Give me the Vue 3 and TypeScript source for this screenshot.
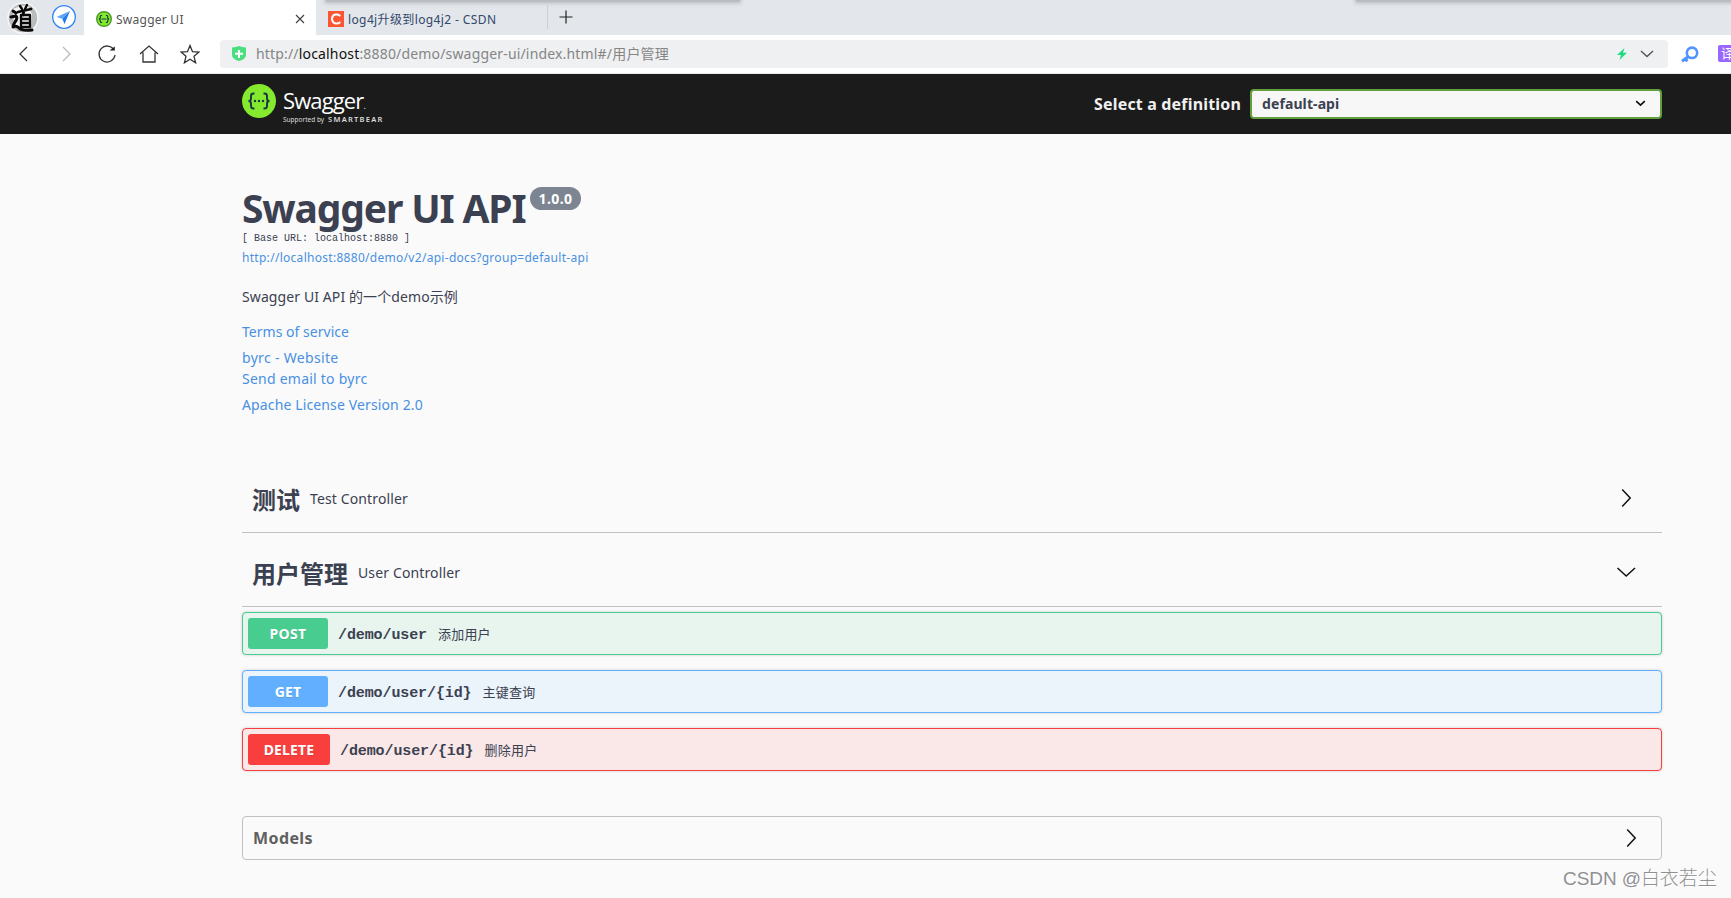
<script setup lang="ts">
interface Operation {
  method: string
  kind: string
  path: string
  summary: string
}
interface Tag {
  name: string
  description: string
  key: string
  open: boolean
}

const tags: Tag[] = [
  { name: '测试', description: 'Test Controller', key: 'test', open: false },
  { name: '用户管理', description: 'User Controller', key: 'user', open: true },
]
const operations: Operation[] = [
  { method: 'POST', kind: 'post', path: '/demo/user', summary: '添加用户' },
  { method: 'GET', kind: 'get', path: '/demo/user/{id}', summary: '主键查询' },
  { method: 'DELETE', kind: 'delete', path: '/demo/user/{id}', summary: '删除用户' },
]
</script>

<template>
  <div class="window">
    <div class="tabs">
      <div class="edge edge-left"></div>
      <div class="edge edge-right"></div>
      <div class="pins">
        <svg class="avatar" width="32" height="32" viewBox="0 0 32 32">
          <circle cx="16" cy="16" r="15" fill="#b9bbbd" stroke="#f6f6f6" stroke-width="1.5" />
          <path d="M6 7Q14 3 21 4L25 12L24 25Q17 30 7 25Z" fill="#f4f4f4" />
          <g fill="none" stroke="#080808" stroke-linecap="round" stroke-linejoin="round">
            <path d="M13 4l2 3M20 3l-2 4" stroke-width="2.4" />
            <path d="M11 10l13-3M17 9l-1 4" stroke-width="2.8" />
            <path d="M14 13h9v12h-9zM14.500 17h8M14.500 21h8" stroke-width="2.3" />
            <path d="M6 9l3 2M4 15l5-1q2 2-1 6q-2 3-2 5q3-2 6 1t13 2" stroke-width="3" />
          </g>
        </svg>
        <svg width="26" height="26" viewBox="0 0 26 26">
          <circle cx="13" cy="13" r="11.3" fill="#fff" stroke="#2b83f6" stroke-width="1.3" />
          <path d="M19 7L5.500 13l5.800 1.700z" fill="#5aa5fa" />
          <path d="M19 7l-7.700 7.700L13.500 20z" fill="#1e78ee" />
        </svg>
      </div>
      <div class="tab active">
        <svg width="16" height="16" viewBox="0 0 34 34">
          <circle cx="17" cy="17" r="15.500" fill="#85ea2d" stroke="#4a9a28" stroke-width="3" />
          <path d="M13 9q-4 0-4 3v3q0 2-3 2q3 0 3 2v3q0 3 4 3M21 9q4 0 4 3v3q0 2 3 2q-3 0-3 2v3q0 3-4 3M12 17h10" fill="none" stroke="#173647" stroke-width="2.500" />
        </svg>
        <span class="tab-title">Swagger UI</span>
        <svg class="close" width="10" height="10" viewBox="0 0 10 10"><path d="M1 1l8 8M9 1L1 9" stroke="#444" stroke-width="1.200" /></svg>
      </div>
      <div class="tab idle">
        <svg width="16" height="16" viewBox="0 0 16 16">
          <path d="M0 0h16v16H0z" fill="#fc5531" />
          <path d="M12.500 5Q8 1.800 5 4.800Q3 8 5 11Q8 14 12.400 11.200" fill="none" stroke="#fff" stroke-width="2" />
        </svg>
        <span class="tab-title csdn">log4j升级到log4j2 - CSDN</span>
      </div>
      <svg class="plus" width="14" height="14" viewBox="0 0 14 14"><path d="M7 .5v13M.5 7h13" stroke="#222" stroke-width="1.200" /></svg>
    </div>

    <div class="nav">
      <div class="nav-buttons">
        <svg width="20" height="20" viewBox="0 0 20 20"><path d="M13 3L6 10l7 7" /></svg>
        <svg width="20" height="20" viewBox="0 0 20 20" class="muted"><path d="M7 3l7 7-7 7" /></svg>
        <svg width="20" height="20" viewBox="0 0 20 20"><path d="M17 6A8 8 0 1 0 18 11" /><path d="M12.500 6.500H17.800V2.500z" fill="#222" stroke="none" /></svg>
        <svg width="20" height="20" viewBox="0 0 20 20"><path d="M1 10l9-8 9 8M4 8.500V18h12V8.500" /></svg>
        <svg width="20" height="20" viewBox="0 0 20 20"><path d="M10 1.500l2.500 6.200 6.500.4-5 4.200 1.600 6.500L10 15.200l-5.600 3.600L6 12.300 1 8.100l6.500-.4z" /></svg>
      </div>
      <div class="address">
        <svg width="14" height="15" viewBox="0 0 14 15">
          <path d="M0 1.500Q4 1.400 7 0q3 1.400 7 1.500V9q0 4-7 6Q0 13 0 9z" fill="#4ade80" />
          <path d="M7 4v8M3 7.700h8" stroke="#fff" stroke-width="2" />
        </svg>
        <span class="location">http://<b>localhost</b>:8880/demo/swagger-ui/index.html#/用户管理</span>
        <svg class="bolt" width="10" height="12" viewBox="0 0 10 12"><path d="M7.500 0L0 7h4L2.500 12 10 4.800H6z" fill="#1ddb7f" /></svg>
        <svg width="14" height="8" viewBox="0 0 14 8"><path d="M1 1l6 5.500L13 1" fill="none" stroke="#555" stroke-width="1.400" /></svg>
      </div>
      <svg class="key" width="18" height="17" viewBox="0 0 18 17">
        <circle cx="11" cy="6.800" r="5.200" fill="none" stroke="#5094ff" stroke-width="2.600" />
        <path d="M7.500 10.500L1 15.300M4.500 13l1.800 2.300" stroke="#5094ff" stroke-width="3" />
      </svg>
      <div class="translate">译</div>
    </div>

    <header class="topbar">
      <div class="wrap">
        <svg class="logo-mark" width="34" height="34" viewBox="0 0 34 34">
          <circle cx="17" cy="17" r="17" fill="#85ea2d" />
          <path d="M12.500 9.500h-1q-2.500 0-2.500 2.500v2.500q0 2.500-2.500 2.500Q9 17 9 19.500V22q0 2.500 2.500 2.500h1M21.500 9.500h1q2.500 0 2.500 2.500v2.500q0 2.500 2.500 2.500Q25 17 25 19.500V22q0 2.500-2.500 2.500h-1" fill="none" stroke="#173647" stroke-width="1.900" />
          <g fill="#173647"><circle cx="13" cy="17" r="1.200" /><circle cx="17" cy="17" r="1.200" /><circle cx="21" cy="17" r="1.200" /></g>
        </svg>
        <div class="brand">
          <div class="brand-name">Swagger<i>.</i></div>
          <div class="brand-by"><span>Supported by</span><strong>SMARTBEAR</strong></div>
        </div>
        <label class="definition"><span>Select a definition</span></label>
        <div class="select">
          <span>default-api</span>
          <svg width="11" height="7" viewBox="0 0 11 7"><path d="M1.200 1.200l4.300 4 4.300-4" fill="none" stroke="#111" stroke-width="1.700" /></svg>
        </div>
      </div>
    </header>

    <main>
      <section class="info">
        <div class="title-row"><h1>Swagger UI API</h1><span class="version">1.0.0</span></div>
        <pre class="base">[ Base URL: localhost:8880 ]</pre>
        <a class="spec">http://localhost:8880/demo/v2/api-docs?group=default-api</a>
        <p>Swagger UI API 的一个demo示例</p>
        <a class="link terms">Terms of service</a>
        <a class="link site">byrc - Website</a>
        <a class="link mail">Send email to byrc</a>
        <a class="link license">Apache License Version 2.0</a>
      </section>

      <section v-for="tag in tags" :key="tag.key" class="tag" :class="tag.key">
        <h3>{{ tag.name }}</h3>
        <small>{{ tag.description }}</small>
        <svg width="20" height="20" viewBox="0 0 20 20"><path :d="tag.open ? 'M1.500 6l8.700 8L19 6' : 'M6.200 1.500l8 8.500-8 8.500'" /></svg>
      </section>

      <div v-for="op in operations" :key="op.kind" class="op" :class="op.kind">
        <span class="method">{{ op.method }}</span>
        <code>{{ op.path }}</code>
        <span class="summary">{{ op.summary }}</span>
      </div>

      <section class="models">
        <h4>Models</h4>
        <svg width="20" height="20" viewBox="0 0 20 20"><path d="M6.200 1.500l8 8.500-8 8.500" /></svg>
      </section>
    </main>
    <div class="watermark"><span>CSDN</span> @白衣若尘</div>
  </div>
</template>

<style>
body { margin: 0; background: #fafafa; overflow: hidden; }
</style>

<style scoped>
* { box-sizing: border-box; }
.window { position: relative; width: 1731px; height: 898px; overflow: hidden; background: #fafafa; color: #3b4151; font-family: "Noto Sans", "Open Sans", "Noto Sans CJK SC", sans-serif; white-space: nowrap; }
svg { display: block; flex: none; }

.tabs { position: relative; display: flex; height: 35px; background: #e3e6eb; overflow: hidden; }
.edge { position: absolute; top: -4px; height: 6px; background: #b9bdc0; box-shadow: 0 0 4px 1px #b4b8bb; }
.edge-left { left: 326px; width: 414px; }
.edge-right { left: 1356px; width: 390px; }
.pins { display: flex; width: 84px; padding: 2px 0 0 7px; gap: 12px; }
.pins svg + svg { margin-top: 2px; }
.tab { display: flex; align-items: center; height: 35px; padding-top: 3px; font-size: 12px; }
.active { position: relative; width: 232px; padding-left: 12px; background: #fff; color: #555; }
.tab-title { margin-left: 4px; letter-spacing: .25px; }
.close { margin-left: auto; margin-right: 11px; }
.idle { position: relative; width: 232px; padding-left: 12px; color: #30486a; }
.idle::after { content: ""; position: absolute; right: 0; top: 5px; width: 1px; height: 24px; background: #ccd0d5; }
.csdn { letter-spacing: .38px; }
.plus { margin: 10px 0 0 11px; }

.nav { display: flex; align-items: center; height: 39px; padding-bottom: 1px; background: #fff; border-bottom: 1px solid #e9e9e9; }
.nav-buttons { display: flex; flex: none; width: 220px; padding-left: 14px; gap: 21.500px; }
.nav-buttons svg { fill: none; stroke: #333; stroke-width: 1.300; }
.nav-buttons .muted { stroke: #bbb; }
.address { display: flex; flex: none; align-items: center; width: 1448px; height: 28px; padding: 0 14px 0 12px; border-radius: 4px; background: #eff0f2; color: #858585; }
.location { margin: -2px 0 0 10px; font-size: 14px; letter-spacing: .17px; }
.location b { color: #111; font-weight: 400; }
.bolt { margin-left: auto; margin-right: 13px; }
.key { margin-left: 13px; margin-top: 2px; }
.translate { width: 20px; height: 17px; margin-left: 19px; flex: none; padding-left: 3px; border-radius: 2px 0 0 2px; background: #9966ff; color: #fff; font-size: 13px; line-height: 16px; }

.topbar { height: 60px; background: #1b1b1b; }
.wrap { display: flex; width: 1420px; height: 60px; margin-left: 242px; }
.logo-mark { margin-top: 10px; }
.brand { width: 130px; margin-left: 7px; color: #fff; }
.brand-name { height: 40px; padding-top: 10px; font-family: "Open Sans"; font-weight: 400; font-size: 22px; line-height: 32px; letter-spacing: -.9px; }
.brand-name i { font-size: 12px; font-style: normal; font-weight: 300; }
.brand-by { display: flex; align-items: baseline; gap: 4px; padding-top: 0; font-size: 6.500px; line-height: 10px; color: #ddd; }
.brand-by strong { font-size: 7.500px; font-weight: 600; letter-spacing: 1.250px; }
.definition { display: flex; justify-content: flex-end; margin-left: auto; padding: 14px 9px 0 0; color: #f0f0f0; font-weight: 700; font-size: 16px; line-height: 32px; letter-spacing: .17px; }
.select { display: flex; align-items: center; justify-content: space-between; width: 412px; height: 30px; margin-top: 15px; padding: 0 14px 2px 10px; border: 2px solid #62a03f; border-radius: 4px; background: #f7f7f7; font-weight: 700; font-size: 14px; letter-spacing: .1px; }

main { width: 1420px; margin-left: 242px; }
.info { display: flex; flex-direction: column; height: 331px; padding-top: 50px; }
.title-row { display: flex; height: 46px; }
h1 { width: 282px; margin: 0; font-size: 39px; line-height: 48px; letter-spacing: -1.150px; }
.version { width: 51px; height: 23px; margin: 3px 0 0 6px; border-radius: 12px; background: #7d8492; color: #fff; font-size: 14px; font-weight: 700; line-height: 23px; text-align: center; letter-spacing: .4px; }
.base { height: 16px; margin: 0; font: 10px/18px "Liberation Mono", monospace; }
.spec { height: 22px; color: #4990e2; font-size: 12px; line-height: 23px; letter-spacing: .29px; }
p { height: 20px; margin: 19px 0 14px; font-size: 14px; line-height: 20px; letter-spacing: .1px; }
.link { height: 21px; color: #4990e2; font-size: 14px; line-height: 21px; }
.terms { margin-bottom: 5px; letter-spacing: .03px; }
.site { letter-spacing: .32px; }
.mail { margin-bottom: 5px; letter-spacing: .24px; }
.license { letter-spacing: .13px; }

.tag { display: flex; align-items: center; height: 68px; padding: 0 26px 1px 10px; border-bottom: 1px solid #c0c1c3; }
.tag.user { height: 74px; padding-top: 6px; margin-bottom: 5px; }
h3 { margin: 0; padding-top: 4px; font-size: 24px; line-height: 34px; }
small { margin-left: 10px; font-size: 14px; letter-spacing: .13px; }
.tag svg, .models svg { margin-left: auto; fill: none; stroke: #111; stroke-width: 1.500; }

.op { display: flex; align-items: center; height: 43px; margin-bottom: 15px; padding-left: 5px; border: 1px solid; border-radius: 4px; box-shadow: 0 0 3px rgba(0, 0, 0, .19); }
.post { border-color: #49cc90; background: #e7f5ee; }
.get { border-color: #61affe; background: #ebf3fb; }
.delete { border-color: #f93e3e; background: #fae7e7; }
.method { width: 80px; height: 31px; border-radius: 3px; color: #fff; font-size: 14px; font-weight: 700; line-height: 31px; text-align: center; text-shadow: 0 1px 0 rgba(0, 0, 0, .1); }
.post .method { background: #49cc90; letter-spacing: .4px; }
.get .method { background: #61affe; letter-spacing: .2px; }
.delete .method { width: 82px; background: #f93e3e; letter-spacing: .15px; }
code { margin-left: 10px; padding-top: 4px; font: 700 15px/20px "Liberation Mono", monospace; letter-spacing: -.1px; }
.summary { margin-left: 11px; font-size: 13px; letter-spacing: .2px; }

.models { display: flex; align-items: center; height: 44px; margin-top: 45px; padding: 0 20px 0 10px; border: 1px solid #c0c1c3; border-radius: 4px; }
h4 { margin: 0; color: #606060; font-size: 16px; letter-spacing: .4px; }
.watermark { position: absolute; left: 1563px; top: 865px; color: #909092; font: 300 19px/28px "Liberation Sans", "Noto Sans CJK SC", sans-serif; letter-spacing: -.08px; text-shadow: 1px 1px 0 #fff; }
</style>
